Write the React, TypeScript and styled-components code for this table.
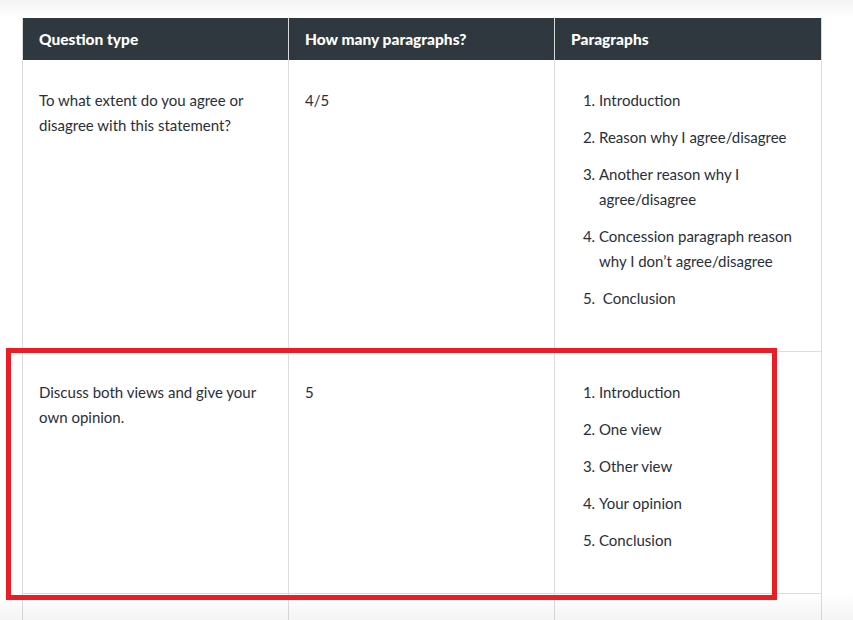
import React from "react";
import styled, { createGlobalStyle } from "styled-components";

const GlobalStyle = createGlobalStyle`
  html, body {
    margin: 0;
    padding: 0;
    background: #fff;
  }
  body {
    font-family: "Lato", "Liberation Sans", sans-serif;
  }
`;

const Page = styled.div`
  position: relative;
  width: 853px;
  height: 620px;
  overflow: hidden;
  padding: 18px 0 0 22px;
  box-sizing: border-box;
  background: linear-gradient(#f3f3f3 0px, #fff 18px);
`;

const BottomFade = styled.div`
  position: absolute;
  left: 0;
  right: 0;
  bottom: 0;
  height: 28px;
  pointer-events: none;
  background: linear-gradient(rgba(0, 0, 0, 0), rgba(0, 0, 0, 0.045));
`;

const Table = styled.table`
  width: 800px;
  table-layout: fixed;
  border-collapse: collapse;
  background: #fff;
  color: #2a2e3c;
  font-size: 15px;
`;

const HeadCell = styled.th`
  background: #2e383e;
  color: #fff;
  text-align: left;
  font-weight: 900;
  font-size: 15.5px;
  height: 42px;
  padding: 0 16px;
  border-left: 1px solid #d9d9d9;
  border-right: 1px solid #d9d9d9;
  box-sizing: border-box;
`;

const Cell = styled.td`
  vertical-align: top;
  padding: 28px 16px 28px;
  line-height: 25px;
  border: 1px solid #dcdcdc;
  border-top: none;
`;

const EmptyCell = styled(Cell)`
  height: 30px;
  padding: 0;
  border-bottom: none;
`;

const Steps = styled.ol`
  margin: 0;
  padding: 0 0 0 28px;
`;

const Step = styled.li`
  margin-bottom: 12px;
`;

const Highlight = styled.div`
  position: absolute;
  left: 6px;
  top: 348px;
  width: 771px;
  height: 252px;
  box-sizing: border-box;
  border: 5px solid #ed1c24;
  pointer-events: none;
`;

const rows = [
  {
    question: "To what extent do you agree or disagree with this statement?",
    count: "4/5",
    steps: [
      "Introduction",
      "Reason why I agree/disagree",
      "Another reason why I agree/disagree",
      "Concession paragraph reason why I don\u2019t agree/disagree",
      "\u00a0Conclusion",
    ],
  },
  {
    question: "Discuss both views and give your own opinion.",
    count: "5",
    steps: ["Introduction", "One view", "Other view", "Your opinion", "Conclusion"],
  },
];

const App: React.FC = () => {
  return (
    <Page>
      <GlobalStyle />
      <Table>
        <colgroup>
          <col style={{ width: 266 }} />
          <col style={{ width: 266 }} />
          <col style={{ width: 267 }} />
        </colgroup>
        <thead>
          <tr>
            <HeadCell>Question type</HeadCell>
            <HeadCell>How many paragraphs?</HeadCell>
            <HeadCell>Paragraphs</HeadCell>
          </tr>
        </thead>
        <tbody>
          {rows.map((r, i) => (
            <tr key={i}>
              <Cell>{r.question}</Cell>
              <Cell>{r.count}</Cell>
              <Cell>
                <Steps>
                  {r.steps.map((s, j) => (
                    <Step key={j}>{s}</Step>
                  ))}
                </Steps>
              </Cell>
            </tr>
          ))}
          <tr>
            <EmptyCell />
            <EmptyCell />
            <EmptyCell />
          </tr>
        </tbody>
      </Table>
      <Highlight />
      <BottomFade />
    </Page>
  );
};

export default App;
